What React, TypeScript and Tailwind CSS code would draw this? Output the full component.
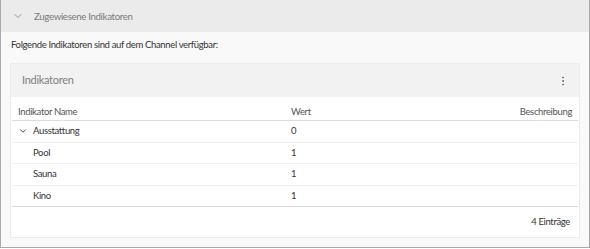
import { ChevronDown, EllipsisVertical } from 'lucide-react';

type Row = { name: string; value: string; group?: boolean };

const rows: Row[] = [
  { name: 'Ausstattung', value: '0', group: true },
  { name: 'Pool', value: '1' },
  { name: 'Sauna', value: '1' },
  { name: 'Kino', value: '1' },
];

export default function App() {
  return (
    <div className="w-[590px] h-[249px] bg-white font-['Lato',sans-serif] text-[9.5px] tracking-[-0.35px] text-[#333]">
      <div className="h-[248px] border border-[#a9a9a9] border-t-0 flex flex-col bg-[#f9f9f9]">
        <div className="h-[32px] bg-[#ebebeb] flex items-center pl-[11px] gap-[10px] text-[#7a7a7a] text-[9.7px]">
          <ChevronDown size={12} strokeWidth={1.5} />
          <span>Zugewiesene Indikatoren</span>
        </div>
        <div className="flex-1 px-[9px] pt-[6px] pb-[9px] flex flex-col">
          <p className="h-[14px] leading-[14px] pl-[1px]">Folgende Indikatoren sind auf dem Channel verfügbar:</p>
          <div className="mt-[11px] flex-1 bg-white border border-[#ececec] flex flex-col">
            <div className="h-[33px] bg-[#f2f2f2] flex items-center justify-between pl-[11px] pr-[10px] text-[#808080] text-[11px] tracking-[-0.3px]">
              <span>Indikatoren</span>
              <EllipsisVertical size={12} strokeWidth={2} className="text-[#666]" />
            </div>
            <div className="px-[1px] pt-[7px]">
              <div className="grid grid-cols-[273px_1fr_auto] items-center h-[17px] border-b border-[#ddd] px-[6px] text-[#555]">
                <span>Indikator Name</span>
                <span>Wert</span>
                <span className="text-right">Beschreibung</span>
              </div>
              {rows.map((r) => (
                <div
                  key={r.name}
                  className="grid grid-cols-[273px_1fr_auto] items-center h-[21.5px] border-b border-[#f0f0f0] last:border-[#d8d8d8] px-[6px]"
                >
                  <span className="flex items-center gap-[5px]">
                    {r.group ? <ChevronDown size={10} strokeWidth={2} /> : <span className="w-[10px]" />}
                    {r.name}
                  </span>
                  <span>{r.value}</span>
                  <span />
                </div>
              ))}
            </div>
            <div className="flex-1 flex items-center justify-end pr-[9px] pt-[1px]">4 Einträge</div>
          </div>
        </div>
      </div>
    </div>
  );
}
